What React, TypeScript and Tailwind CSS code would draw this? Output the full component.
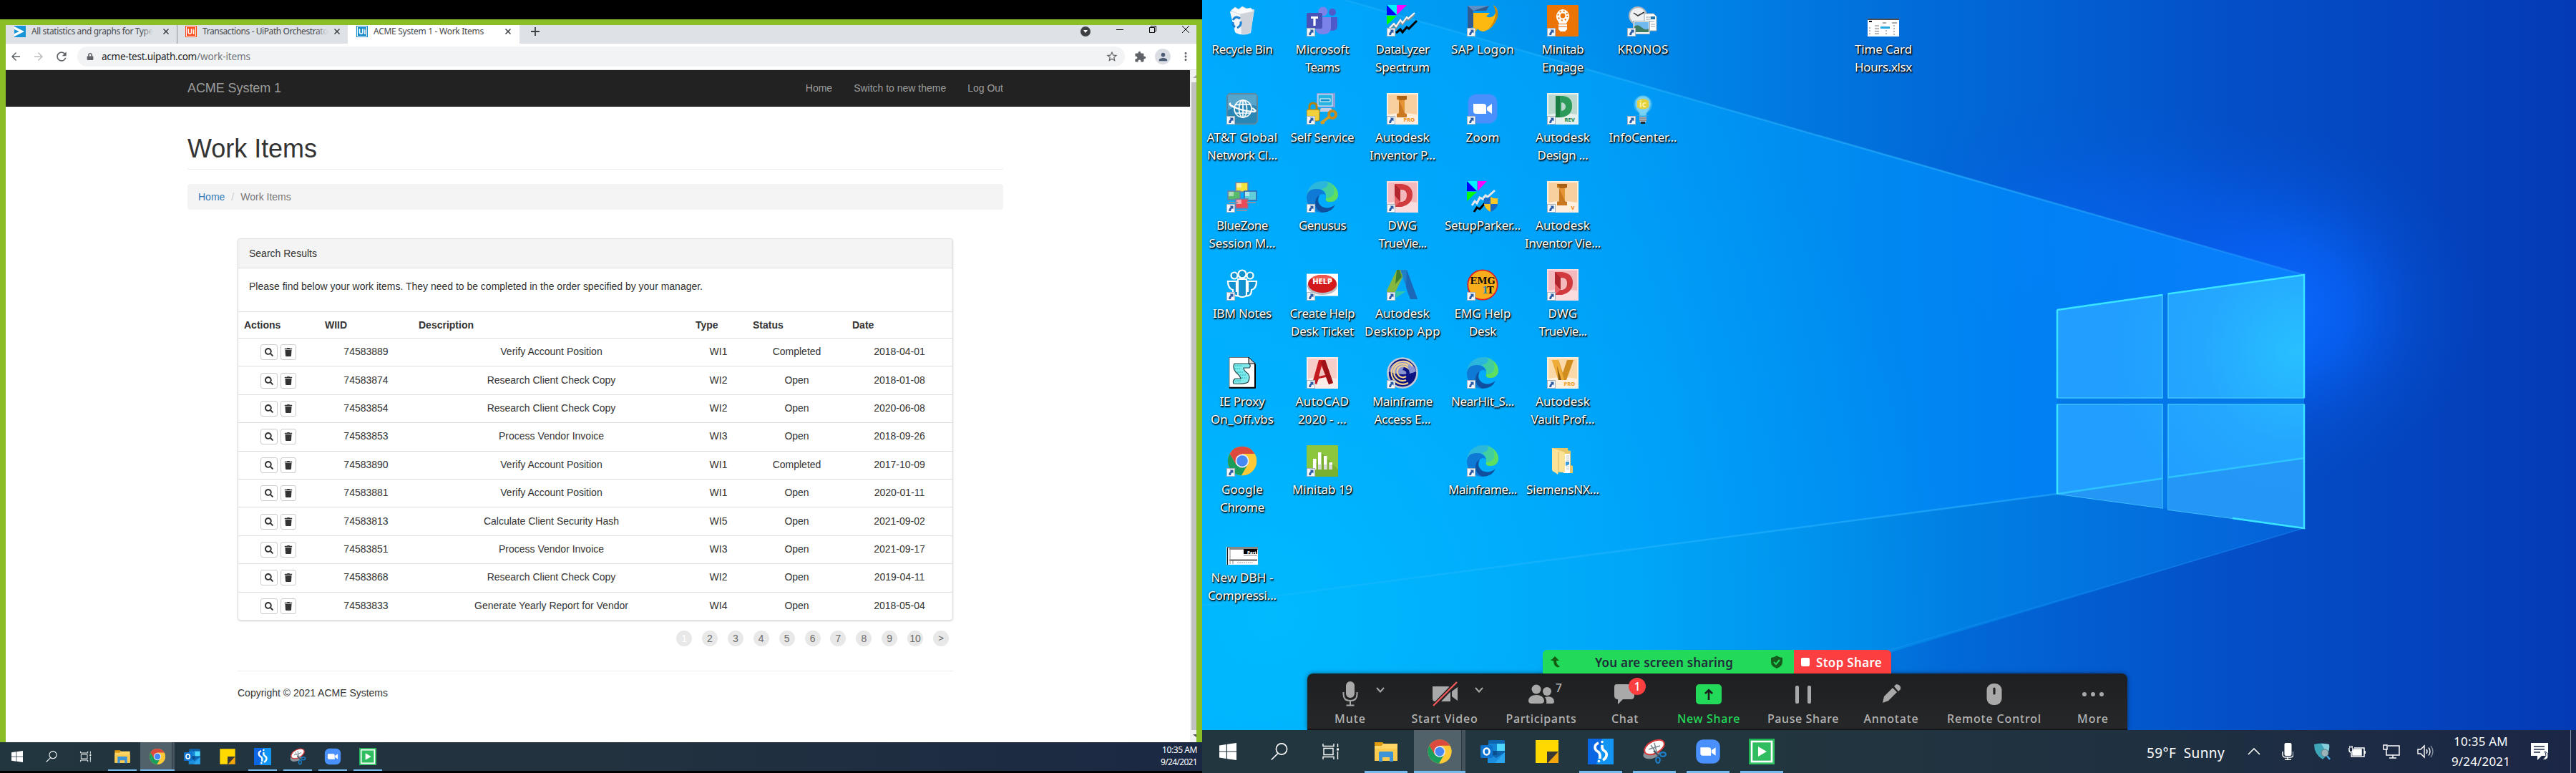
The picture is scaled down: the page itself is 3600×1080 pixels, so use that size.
import React, { useLayoutEffect, useRef, useState } from "react";
import { FaSearch, FaTrash, FaLock } from "react-icons/fa";
import { MdExtension, MdPerson, MdStarBorder, MdMoreVert, MdRefresh, MdArrowBack, MdArrowForward } from "react-icons/md";

/* Spreads a line of text over a known width by adjusting its tracking. */
function Fit({ w, children, className = "" }: { w: number; children: string; className?: string }) {
  const ref = useRef<HTMLSpanElement>(null);
  const [spacing, setSpacing] = useState(0);
  useLayoutEffect(() => {
    if (ref.current) {
      const natural = ref.current.getBoundingClientRect().width;
      setSpacing((w - natural) / children.length);
    }
  }, []);
  return (
    <span ref={ref} className={"inline-block whitespace-pre " + className} style={{ letterSpacing: spacing }}>
      {children}
    </span>
  );
}

/* ---------- icons shared by the task bars and the desktop ---------- */

const WindowsLogo = () => (
  <svg viewBox="0 0 24 24" className="h-full w-full" fill="#fff">
    <path d="M0 3.4 9.8 2v9.5H0zM11 1.8 24 0v11.5H11zM0 12.6h9.8V22L0 20.6zM11 12.6h13V24l-13-1.8z" />
  </svg>
);
const SearchGlyph = () => (
  <svg viewBox="0 0 24 24" className="h-full w-full" fill="none" stroke="#fff" strokeWidth="1.6">
    <circle cx="15" cy="8.5" r="7.6" />
    <path d="M10 14.5.8 23.5" />
  </svg>
);
const TaskView = () => (
  <svg viewBox="0 0 24 24" className="h-full w-full" fill="none" stroke="#fff" strokeWidth="1.4">
    <path d="M1 1v3.5h15V1M1 23v-3.5h15V23M2 7.5h13v9H2zM21.500 1v5M21.500 12v11" />
    <path d="M20 7.500h3v3h-3z" fill="#fff" stroke="none" />
  </svg>
);
const Explorer = () => (
  <svg viewBox="0 0 36 36" className="h-full w-full">
    <path d="M2 5h11l3 3h-3l-3 3H2z" fill="#e09a0b" />
    <path d="M2 10h9l3-3h20v24H2z" fill="#ffd566" />
    <path d="M2 14h32v17H2z" fill="#fbcb50" />
    <path d="M8 32V19.500q0-1.500 1.500-1.500h17q1.500 0 1.500 1.500V32h-5v-6H13v6z" fill="#3d93d8" />
  </svg>
);
const Chrome = () => (
  <svg viewBox="0 0 48 48" className="h-full w-full">
    <circle cx="24" cy="24" r="22" fill="#fdc936" />
    <path d="M24 13h19.100A22 22 0 0 0 4.900 13l9.600 16.500z" fill="#dc4a3d" />
    <path d="M4.950 13A22 22 0 0 0 23 46l9.500-16.500H14.500z" fill="#1a9e5b" />
    <path d="M24 14h19.600A22 22 0 0 1 23 46l10-17z" fill="#fdc936" />
    <circle cx="24" cy="24" r="10.400" fill="#e9f0fb" />
    <circle cx="24" cy="24" r="8.500" fill="#4688f4" />
  </svg>
);
const Outlook = () => (
  <svg viewBox="0 0 36 36" className="h-full w-full">
    <rect x="11" y="2" width="23" height="30" rx="1.500" fill="#0f64ad" />
    <path d="M11 7h12v10H11z" fill="#1583d6" />
    <path d="M23 7h11v10H23z" fill="#50d9ff" />
    <path d="M11 17h12v6H11z" fill="#0a4f91" />
    <path d="M10 20l12 7 12-8v15H10z" fill="#1c8ee0" />
    <path d="M34 19v15H20z" fill="#2aa5ee" />
    <rect x="0" y="9" width="17" height="18" rx="1.500" fill="#0c73cf" />
    <ellipse cx="8.500" cy="18" rx="4" ry="4.600" fill="none" stroke="#fff" strokeWidth="2.500" />
  </svg>
);
const Sticky = () => (
  <svg viewBox="0 0 36 36" className="h-full w-full">
    <path d="M2 2h32v16L18 34H2z" fill="#ffd900" />
    <path d="M18 34V18h16L20 34z" fill="#3a3835" />
    <path d="M34 18v16H19z" fill="#f2a60c" />
  </svg>
);
const SApp = () => (
  <svg viewBox="0 0 36 36" className="h-full w-full">
    <rect width="36" height="36" fill="#0b66e4" />
    <path d="M20 0h16v36H12z" fill="#1295f2" />
    <path d="M15 6q-5 2-5 6 0 4 4 6 3 2 3 6v4" fill="none" stroke="#fff" strokeWidth="3.600" />
    <path d="M20 9v3q0 3 3 5 4 2 3 7-1 4-5 6" fill="none" stroke="#fff" strokeWidth="3.600" />
    <circle cx="20" cy="4.500" r="1.800" fill="#fff" />
    <circle cx="15.500" cy="31.500" r="1.800" fill="#fff" />
  </svg>
);
const Snip = () => (
  <svg viewBox="0 0 36 36" className="h-full w-full">
    <ellipse cx="14" cy="21" rx="12" ry="7" fill="#8b9297" transform="rotate(-15 14 21)" />
    <ellipse cx="18" cy="12" rx="15" ry="8.500" fill="#fff" stroke="#d9383a" strokeWidth="2" transform="rotate(-28 18 12)" />
    <path d="m10 15 16-5M18 6l4 16M13 9l9 13" stroke="#7b8790" strokeWidth="1.500" fill="none" />
    <path d="m17 17 7 7" stroke="#3d4f5c" strokeWidth="2" />
    <ellipse cx="30" cy="22" rx="4" ry="2.800" fill="none" stroke="#1f7fc6" strokeWidth="2.200" />
    <ellipse cx="23" cy="30" rx="2.800" ry="4" fill="none" stroke="#1f7fc6" strokeWidth="2.200" />
  </svg>
);
const ZoomApp = () => (
  <svg viewBox="0 0 44 44" className="h-full w-full">
    <rect x="1.500" y="1.500" width="41" height="41" rx="12" fill="#4a90fc" />
    <path d="M9 15h14q4 0 4 4v10H13q-4 0-4-4z" fill="#fff" />
    <path d="m28 20 7-5v14l-7-5z" fill="#fff" />
  </svg>
);
const Camtasia = () => (
  <svg viewBox="0 0 36 36" className="h-full w-full">
    <rect width="36" height="36" fill="#1fb254" />
    <path d="M0 36 36 0v36z" fill="#35c566" />
    <rect x="4" y="4" width="28" height="28" fill="#2fbd5f" stroke="#fff" strokeWidth="2.600" />
    <path d="m13 11 12 7-12 7z" fill="#fff" />
  </svg>
);

/* ---------- desktop icons, drawn on a 44 × 44 canvas ---------- */

const S = ({ children }: { children: React.ReactNode }) => (
  <svg viewBox="0 0 44 44" className="h-11 w-11">
    {children}
  </svg>
);
const Recycle = () => (
  <S>
    <path d="M5 9 39 6l-5 33q-10 5-21 0z" fill="#e4e8ec" />
    <path d="m5 9 14 2 2 30q-5 0-9-3z" fill="#f4f6f8" />
    <path d="m39 7-20 4 2 30q7 0 12-2z" fill="#cdd3d9" />
    <path d="M6 8 12 3l5 3 5-4 6 3 6-1 4 5-19 4z" fill="#fafbfc" stroke="#c9ced3" strokeWidth=".7" />
    <path d="M9 21q4-7 10-2M20 23q1 6-5 9M9 24q0 5 3 7" fill="none" stroke="#1c7fd4" strokeWidth="3" />
  </S>
);
const Teams = () => (
  <S>
    <circle cx="36" cy="10" r="5" fill="#5059c9" />
    <path d="M31 17h12v12q0 7-7 7-5 0-7-3z" fill="#5059c9" />
    <circle cx="23" cy="9" r="6.500" fill="#7b83eb" />
    <path d="M12 17h22v14q0 10-11 10T12 31z" fill="#7b83eb" />
    <rect x="0" y="11" width="22" height="22" rx="2" fill="#4a52b8" />
    <path d="M6 16h10v3h-3.400v10H9.400V19H6z" fill="#fff" />
  </S>
);
const DataLyzer = () => (
  <S>
    <path d="M0 0h14v14z" fill="#00f3ff" />
    <path d="M0 0v14h14z" fill="#00f" />
    <path d="M14 0h14L14 14z" fill="#f0f" />
    <path d="M0 15h14L0 28z" fill="#0f0" />
    <path d="m4 33 6-6 3 4 6-9 3 4 6-8 2 2 8-7" fill="none" stroke="#8a8f94" strokeWidth="4" />
    <path d="m4 32 6-6 3 4 6-9 3 4 6-8 2 2 9-8" fill="none" stroke="#fff" strokeWidth="2" />
    <path d="m13 39 6-5 3 4 6-7 3 2 11-11" fill="none" stroke="#000" strokeWidth="3" />
  </S>
);
const SetupParker = () => (
  <S>
    <path d="M0 0h14v14z" fill="#00f3ff" />
    <path d="M0 0v14h14z" fill="#00f" />
    <path d="M15 0h13L15 14z" fill="#f0f" />
    <path d="M0 15h14L0 28z" fill="#0f0" />
    <path d="m7 34 4-6 3 3 4-8 4 2 4-5 3 2 10-9" fill="none" stroke="#e3e6e9" strokeWidth="3" />
    <path d="m10 43 4-6 4 2 7-8" fill="none" stroke="#000" strokeWidth="3" />
    <path d="M33 22q5 3 10 2v8q0 7-10 11-9-4-9-11v-8q5 0 9-2z" fill="#1769c5" />
    <path d="M33 22q5 3 10 2v8H33zM33 32v11q-8-4-9-11z" fill="#fbc626" />
  </S>
);
const Sap = () => (
  <S>
    <path d="M1 1h30l-4 7H9v22l-8 6z" fill="#2d5b92" />
    <path d="M1 1h30L9 8z" fill="#5c8fc4" />
    <path d="M9 11h23l-5 5q9 4 13-5 1-6-3-11 9 6 5 19-5 14-18 18-6 0-9-4l-6 9z" fill="#fdb90f" />
    <path d="M37 0q9 7 5 19-3 9-12 15 10-12 10-22 0-6-3-12z" fill="#c98708" />
  </S>
);
const Engage = () => (
  <S>
    <rect width="44" height="44" rx="1" fill="#ec7404" />
    <path d="M22 6a10 10 0 0 1 7 16l-2 4H17l-2-4a10 10 0 0 1 7-16zM16 27h12v3H16zM16 31h12v3l-3 3h-6l-3-3z" fill="#fff" />
    <circle cx="22" cy="15" r="3.400" fill="#ec7404" />
    <circle cx="22" cy="15" r="6.500" fill="none" stroke="#ec7404" strokeWidth="2" strokeDasharray="2 3.100" />
  </S>
);
const Kronos = () => (
  <S>
    <circle cx="15" cy="15" r="12" fill="#eef0f2" stroke="#b0b6bb" strokeWidth="2" />
    <path d="M9 11l6 4 9-5" stroke="#333" strokeWidth="1.500" fill="none" />
    <path d="M24 12h13l4 4v20H24z" fill="#fff" stroke="#9aa5ae" />
    <path d="M26 17h7M26 20h7M26 23h12M33 27h6M33 30h6" stroke="#90a0ae" />
    <path d="M33 16h6v4h-6z" fill="#1c73ad" />
    <rect x="8.500" y="22.500" width="23" height="18" fill="#fff" stroke="#9aa5ae" />
    <path d="M10 24h20v11H10z" fill="#6fb9ee" />
    <path d="M10 30q5-4 10 1t10 2v5H10z" fill="#3f7a63" />
  </S>
);
const Att = () => (
  <S>
    <rect x=".8" y=".8" width="42.400" height="42.400" rx="5" fill="#2a86b4" stroke="#6d8797" strokeWidth="1.600" />
    <path d="M2 4q0-2 2-2h36q2 0 2 2v14Q20 14 2 24z" fill="#55a5cc" />
    <g fill="none" stroke="#fff" strokeWidth="1.700">
      <circle cx="23" cy="22" r="12" />
      <ellipse cx="23" cy="22" rx="5.500" ry="12" />
      <path d="M23 10v24M13 16h20M12 28h22" />
      <path d="M6 14q-5 2 8 7t25 5q4-1-3-5" strokeWidth="2.400" />
    </g>
  </S>
);
const SelfService = () => (
  <S>
    <rect x="14" y="0" width="26" height="20" fill="#8ba0da" />
    <rect x="16" y="2" width="20" height="16" fill="#27b4e2" stroke="#dfe8f7" />
    <path d="M19 8h14v4H19z" fill="#1192cf" stroke="#fff" />
    <path d="M20 21h14l4 5H18z" fill="#c4cde4" />
    <path d="M4 24v-5q0-5 5-5t5 5v5" fill="none" stroke="#b1820d" strokeWidth="3" />
    <rect x="0" y="23" width="18" height="16" rx="2" fill="#f2cf3c" stroke="#a7780c" />
    <circle cx="36" cy="30" r="5" fill="none" stroke="#c98a1a" strokeWidth="4" />
    <path d="m32 33-12 9 3-1 2 1" stroke="#d69c26" strokeWidth="3.500" fill="none" />
  </S>
);
const Tile = ({ bg, low, children }: { bg: string; low: string; children: React.ReactNode }) => (
  <S>
    <rect width="44" height="44" fill={low} />
    <path d="M2 2h40v28Q20 26 2 30z" fill={bg} />
    {children}
  </S>
);
const InventorI = ({ tag, x }: { tag: string; x: number }) => (
  <Tile bg="#f8cf9f" low="#fdeede">
    <path d="M14 4h14v5l-3 1v18l3 1v5H14v-5l3-1V10l-3-1z" fill="#c9781f" />
    <path d="M14 4h14v5l-9 1z" fill="#a95f14" />
    <path d="m17 10 8 18V10z" fill="#e59536" />
    <text x={x} y="40" fontSize="7.500" fontWeight="800" fill="#f0922a" fontFamily="Noto Sans">{tag}</text>
  </Tile>
);
const DesignRev = () => (
  <Tile bg="#bcd9d0" low="#e6f1ed">
    <path d="M12 4h8q15 0 15 14T20 34h-8zm8 9v12q6-1 6-6t-6-6z" fill="#2c9a58" fillRule="evenodd" />
    <path d="M12 4h6v30h-6z" fill="#1b7c43" />
    <text x="24.500" y="40" fontSize="7.500" fontWeight="800" fill="#1c8a4c" fontFamily="Noto Sans">REV</text>
  </Tile>
);
const Dwg = () => (
  <Tile bg="#f4b9bd" low="#fbdcde">
    <path d="M11 4h10q15 2 15 15T21 36H11zm8 8v17q9 0 9-9t-9-8z" fill="#d13b3f" fillRule="evenodd" />
    <path d="m11 4 8 8v17l-8 7z" fill="#b0262c" />
    <path d="M11 20 19 29l-8 7z" fill="#e46467" />
  </Tile>
);
const BlueZone = () => (
  <S>
    <rect x="13" y="2" width="17" height="13" fill="#f3e33c" stroke="#6c7fae" strokeWidth="1.500" />
    <rect x="2" y="14" width="17" height="12" fill="#58bb69" stroke="#6c7fae" strokeWidth="1.500" />
    <rect x="25" y="14" width="17" height="13" fill="#62cfd8" stroke="#2f66b0" strokeWidth="1.500" />
    <rect x="13" y="25" width="17" height="13" fill="#ec4a56" stroke="#6c7fae" strokeWidth="1.500" />
    <path d="M3 15h7v6H3zM14 3h7v6h-7zM26 15h6v6h-6zM14 26h7v6h-7z" fill="#fff" opacity=".5" />
    <path d="M3 30h13M28 30h13M14 41h15" stroke="#8793a3" strokeWidth="2" />
  </S>
);
const Edge = () => (
  <S>
    <path d="M0 21C1 8 11 0 22 0c13 0 22 9 22 19 0 6-5 10-11 10-5 0-7-2-6-5 1-9-5-13-12-13Q4 12 0 21z" fill="#2bb6dc" />
    <path d="M22 0c13 0 22 9 22 19 0 6-5 10-11 10-5 0-7-2-6-5 1-8-2-11-7-13 8-1 12-6 8-11z" fill="#41cfa0" />
    <path d="M36 5q8 6 8 14c0 6-5 10-11 10-5 0-7-2-6-5 12 0 14-10 9-19z" fill="#5fdf5e" />
    <path d="M0 22Q1 11 14 11q10 0 13 9-5-4-9 0-6 5-4 12 3 8 9 12C8 44 0 34 0 22z" fill="#0f7ad6" />
    <path d="M18 20q-5 10 4 16 9 4 18-3-5 11-18 11Q12 40 12 30q1-8 6-10z" fill="#104f9e" />
  </S>
);
const IbmNotes = () => (
  <S>
    <g fill="#1191cd" stroke="#fff" strokeWidth="2.200">
      <path d="M2 17h12v14h4v6q-9 2-9-8-7-2-7-12zM42 17H30v14h-4v6q9 2 9-8 7-2 7-12z" />
      <path d="M16 14h12v22q-1 3-6 3t-6-3z" />
      <circle cx="11" cy="9" r="4.500" />
      <circle cx="33" cy="9" r="4.500" />
      <circle cx="22" cy="7" r="5.500" />
    </g>
  </S>
);
const Help = () => (
  <S>
    <rect y="6.500" width="44" height="31" fill="#fff" />
    <ellipse cx="22" cy="24" rx="21" ry="12" fill="#b9bfc4" />
    <ellipse cx="22" cy="20.500" rx="20" ry="12.500" fill="#d21a1d" />
    <ellipse cx="22" cy="13" rx="14" ry="5" fill="#ee5b52" />
    <text x="22" y="21" textAnchor="middle" fontSize="11" fontWeight="800" fill="#fff" fontFamily="Noto Sans">HELP</text>
  </S>
);
const DesktopApp = () => (
  <S>
    <path d="M14 1h7l3 6L12 32 1 33l-1-3z" fill="#86b840" />
    <path d="m14 1 4 0 3 10-9 10z" fill="#3c7c35" />
    <path d="M19 1h9l15 41H33z" fill="#1f7fc9" />
    <path d="m28 1 15 41H33l-6-16z" fill="#1a5db0" opacity=".7" />
    <path d="M11 31h16l-14 9z" fill="#31c3ac" />
  </S>
);
const Emg = () => (
  <S>
    <circle cx="22" cy="22" r="20.700" fill="#fbae1b" stroke="#d81f26" strokeWidth="1.800" />
    <text x="22" y="21" textAnchor="middle" fontSize="13" fontWeight="900" fill="#0c0c0c" fontFamily="DejaVu Serif">EMG</text>
    <text x="21" y="34" fontSize="13" fontWeight="900" fill="#1f86a8" fontFamily="DejaVu Serif">1</text>
    <text x="28" y="34" fontSize="13" fontWeight="900" fill="#0c0c0c" fontFamily="DejaVu Serif">T</text>
  </S>
);
const Proxy = () => (
  <S>
    <path d="M4 .5h27l9 8V43H4z" fill="#fff" stroke="#777" />
    <path d="M4 42.800h36V9" fill="none" stroke="#000" strokeWidth="2" />
    <path d="M31 0v9h9z" fill="#d0d0d0" stroke="#000" />
    <path d="M11 9h20q4 2 1 6h-8q0 4 6 8 4 5 0 12-4 3-20 2-2-4 2-7h8q-1-4-7-9-5-6-2-12z" fill="#7fe9ec" stroke="#26484c" strokeWidth="1.200" />
    <path d="M12 12h10M11 16h8M15 21h8M19 25h8M21 29h7M12 33h9" stroke="#18b6ba" strokeDasharray="2 1" />
  </S>
);
const AutoCad = () => (
  <Tile bg="#f7cfc8" low="#fcece8">
    <path d="M17 4h9l11 32-6 2-4-10-10 2-3 8-6-2z" fill="#c4191e" />
    <path d="m21 12 5 13-9 2z" fill="#f2c5bf" />
    <path d="m26 4 11 32-6 2L20 6z" fill="#9d1217" />
  </Tile>
);
const Mainframe = () => (
  <S>
    <circle cx="22" cy="22" r="20.500" fill="#0c1483" stroke="#c4c9d2" strokeWidth="2.600" />
    <path d="M3 20a19.500 19.500 0 0 1 38 0q-18 8-38 0z" fill="#8a94d2" />
    <g fill="none" stroke="#f6d28c" strokeWidth="2.200">
      <path d="M36 13A16 16 0 1 0 30 36M30 12A12 12 0 1 0 27 32M30 17a8 8 0 1 0-3 10" />
    </g>
    <path d="M22 18q7 1 5 7l5-2q0-8-8-9z" fill="#0c1483" />
  </S>
);
const Vault = () => (
  <Tile bg="#fbd9a9" low="#fef0dc">
    <path d="M7 4h9l6 18 6-18h9L27 32H16z" fill="#d08d1d" />
    <path d="m7 4 9 0 8 28h-8z" fill="#f0ac38" />
    <path d="m14 12 6 20h-4z" fill="#8d5b0d" />
    <text x="23.500" y="40" fontSize="7.500" fontWeight="800" fill="#f0a02a" fontFamily="Noto Sans">PRO</text>
  </Tile>
);
const Minitab = () => (
  <S>
    <rect width="44" height="44" rx="1.500" fill="#8cc63f" />
    <path d="m20 10 24 24v10H10V34z" fill="#79b02f" />
    <path d="M9 19h4.500v15H9zM16 10h4.500v24H16zM24 15h4.500v19H24zM31.500 24h4.500v10h-4.500z" fill="#fff" />
    <path d="M16 27h4.500v7H16zM24 27h4.500v7H24zM31.500 27h4.500v7h-4.500z" fill="#d5d9d5" />
  </S>
);
const Bulb = () => (
  <S>
    <circle cx="22" cy="16" r="13" fill="#66d8ff" opacity=".35" />
    <path d="M22 4a11 11 0 0 1 11 12q-1 7-6 12v4H17v-4q-5-5-6-12A11 11 0 0 1 22 4z" fill="#8fdcf5" opacity=".8" stroke="#5cb3df" strokeWidth=".8" />
    <path d="M14 11q8-6 16 0v9q-8 5-16 0z" fill="#e2cf3c" />
    <text x="22" y="20" textAnchor="middle" fontSize="12" fontWeight="700" fill="#fff3a0" fontFamily="Noto Sans">ic</text>
    <path d="M17 33h10v6l-3 3h-4l-3-3z" fill="#b8bfc5" />
    <path d="M17 35h10M17 38h10" stroke="#5f676e" />
    <path d="M19 40h6v3h-6z" fill="#23282c" />
  </S>
);
const Folder = () => (
  <S>
    <path d="M7 4h22v3l4 1v20l3 1v10h-4L8 37z" fill="#e9c766" />
    <path d="M23 12h9v27h-9z" fill="#fff" />
    <path d="M27 15h4M27 18h4M27 21h4M27 30h4M27 33h4" stroke="#b7bdc2" />
    <path d="M26 23h5v4l-5 2z" fill="#3d9ad8" />
    <path d="m7 4 18 6v28l-9-1-1 4-8-6z" fill="#fbe299" />
    <path d="M16 9v28" stroke="#edcb78" strokeWidth="2" />
  </S>
);
const Dbh = () => (
  <S>
    <rect y="19" width="44" height="25" fill="#fff" />
    <path d="M1 20h43M1.500 20v24M4 22h40" stroke="#111" strokeWidth="1.200" />
    <path d="M24 22h19v7H24z" fill="#000" />
    <path d="M4 37.500h39" stroke="#222" strokeWidth="1.400" />
    <path d="M5 22v21M9 38v5M24 31h19" stroke="#888" />
    <text x="29" y="28.500" fontSize="6" fontWeight="800" fill="#fff" fontFamily="Noto Sans">Part</text>
    <path d="M15 41h22" stroke="#999" strokeDasharray="2 1" />
  </S>
);
const TimeCard = () => (
  <S>
    <rect y="19" width="44" height="25" fill="#fff" />
    <path d="M0 20h44" stroke="#111" strokeWidth="1.500" />
    <path d="M2 23h4" stroke="#111" strokeWidth="2" />
    <path d="M21 25h5M34 25h7" stroke="#555" />
    <path d="M18 30h13v3H18z" fill="#27a9e3" />
    <path d="M10 29h6M10 33h6M10 36.500h6M10 40h6M2 32h2M2 36h2M2 40h2M25 36h2M25 40h2M36 29h2M36 33h2M36 37h2M36 41h2" stroke="#777" />
  </S>
);

type Line = [string, number];
type Item = { c: number; r: number; icon: React.ReactNode; link?: boolean; lines: Line[] };

const items: Item[] = [
  { c: 1, r: 1, icon: <Recycle />, link: false, lines: [["Recycle Bin", 85]] },
  { c: 2, r: 1, icon: <Teams />, lines: [["Microsoft", 75], ["Teams", 48]] },
  { c: 3, r: 1, icon: <DataLyzer />, lines: [["DataLyzer", 75], ["Spectrum", 76]] },
  { c: 4, r: 1, icon: <Sap />, lines: [["SAP Logon", 88]] },
  { c: 5, r: 1, icon: <Engage />, lines: [["Minitab", 59], ["Engage", 58]] },
  { c: 6, r: 1, icon: <Kronos />, lines: [["KRONOS", 71]] },
  { c: 9, r: 1, icon: <TimeCard />, link: false, lines: [["Time Card", 80], ["Hours.xlsx", 80]] },
  { c: 1, r: 2, icon: <Att />, lines: [["AT&T Global", 99], ["Network Cl...", 98]] },
  { c: 2, r: 2, icon: <SelfService />, lines: [["Self Service", 89]] },
  { c: 3, r: 2, icon: <InventorI tag="PRO" x={23.5} />, lines: [["Autodesk", 76], ["Inventor P...", 92]] },
  { c: 4, r: 2, icon: <div className="h-11 w-11"><ZoomApp /></div>, lines: [["Zoom", 47]] },
  { c: 5, r: 2, icon: <DesignRev />, lines: [["Autodesk", 76], ["Design ...", 71]] },
  { c: 6, r: 2, icon: <Bulb />, lines: [["InfoCenter...", 95]] },
  { c: 1, r: 3, icon: <BlueZone />, lines: [["BlueZone", 72], ["Session M...", 93]] },
  { c: 2, r: 3, icon: <Edge />, lines: [["Genusus", 66]] },
  { c: 3, r: 3, icon: <Dwg />, lines: [["DWG", 41], ["TrueVie...", 67]] },
  { c: 4, r: 3, icon: <SetupParker />, link: false, lines: [["SetupParker...", 106]] },
  { c: 5, r: 3, icon: <InventorI tag="V" x={33.5} />, lines: [["Autodesk", 76], ["Inventor Vie...", 106]] },
  { c: 1, r: 4, icon: <IbmNotes />, lines: [["IBM Notes", 82]] },
  { c: 2, r: 4, icon: <Help />, lines: [["Create Help", 91], ["Desk Ticket", 88]] },
  { c: 3, r: 4, icon: <DesktopApp />, lines: [["Autodesk", 76], ["Desktop App", 106]] },
  { c: 4, r: 4, icon: <Emg />, lines: [["EMG Help", 79], ["Desk", 38]] },
  { c: 5, r: 4, icon: <Dwg />, lines: [["DWG", 41], ["TrueVie...", 67]] },
  { c: 1, r: 5, icon: <Proxy />, link: false, lines: [["IE Proxy", 63], ["On_Off.vbs", 88]] },
  { c: 2, r: 5, icon: <AutoCad />, lines: [["AutoCAD", 75], ["2020 - ...", 68]] },
  { c: 3, r: 5, icon: <Mainframe />, lines: [["Mainframe", 84], ["Access E...", 79]] },
  { c: 4, r: 5, icon: <Edge />, lines: [["NearHit_S...", 88]] },
  { c: 5, r: 5, icon: <Vault />, lines: [["Autodesk", 76], ["Vault Prof...", 89]] },
  { c: 1, r: 6, icon: <div className="h-11 w-11"><Chrome /></div>, lines: [["Google", 58], ["Chrome", 62]] },
  { c: 2, r: 6, icon: <Minitab />, lines: [["Minitab 19", 84]] },
  { c: 4, r: 6, icon: <Edge />, lines: [["Mainframe...", 96]] },
  { c: 5, r: 6, icon: <Folder />, link: false, lines: [["SiemensNX...", 102]] },
  { c: 1, r: 7, icon: <Dbh />, link: false, lines: [["New DBH -", 87], ["Compressi...", 96]] },
];

function DesktopIcon({ item }: { item: Item }) {
  return (
    <div className="flex flex-col items-center" style={{ gridColumn: item.c, gridRow: item.r }}>
      <div className="relative h-11 w-11">
        {item.icon}
        {item.link !== false && (
          <svg viewBox="0 0 12 12" className="absolute bottom-0 left-0 h-3 w-3">
            <rect x=".5" y=".5" width="11" height="11" fill="#f6f8fa" stroke="#a5b3c0" />
            <path d="M4.500 2.500H9.500V7.500L8 6Q6 7.500 6 10H3.200Q3 6.500 6 4z" fill="#2a5ba4" />
          </svg>
        )}
      </div>
      <div className="mt-[5px] flex flex-col items-center text-[17px] leading-[25px] text-white [text-shadow:1px_1px_1px_#000,1px_2px_2px_rgba(0,0,0,0.85),0_0_3px_rgba(0,0,0,0.5)]">
        {item.lines.map(([t, w]) => (
          <Fit key={t} w={w}>{t}</Fit>
        ))}
      </div>
    </div>
  );
}

function Wallpaper() {
  return (
    <svg className="absolute inset-0 h-[1080px] w-[1920px]" viewBox="1680 0 1920 1080" preserveAspectRatio="none">
      <defs>
        <linearGradient id="base" x1="1680" x2="3600" y1="0" y2="0" gradientUnits="userSpaceOnUse">
          <stop offset="0" stopColor="#00a2f8" />
          <stop offset=".2" stopColor="#0098f1" />
          <stop offset=".32" stopColor="#008aea" />
          <stop offset=".45" stopColor="#0175de" />
          <stop offset=".6" stopColor="#0262d4" />
          <stop offset=".75" stopColor="#044fc8" />
          <stop offset="1" stopColor="#043ab5" />
        </linearGradient>
        <linearGradient id="beam" x1="1680" x2="3220" y1="0" y2="0" gradientUnits="userSpaceOnUse">
          <stop offset="0" stopColor="#00abfe" />
          <stop offset=".35" stopColor="#009ff7" />
          <stop offset=".55" stopColor="#0091f4" />
          <stop offset=".75" stopColor="#0086f8" />
          <stop offset="1" stopColor="#0a84ff" />
        </linearGradient>
        <linearGradient id="under" x1="1680" x2="3220" y1="0" y2="0" gradientUnits="userSpaceOnUse">
          <stop offset="0" stopColor="#00b2fc" />
          <stop offset=".4" stopColor="#00a2f2" />
          <stop offset=".7" stopColor="#0086e6" />
          <stop offset="1" stopColor="#0569e0" />
        </linearGradient>
        <radialGradient id="low" cx="1780" cy="860" r="950" gradientUnits="userSpaceOnUse">
          <stop offset="0" stopColor="#00bcff" stopOpacity=".85" />
          <stop offset=".5" stopColor="#00b2ff" stopOpacity=".5" />
          <stop offset="1" stopColor="#00a8ff" stopOpacity="0" />
        </radialGradient>
        <radialGradient id="glow">
          <stop offset="0" stopColor="#0a6cff" />
          <stop offset=".35" stopColor="#0864fa" stopOpacity=".75" />
          <stop offset=".7" stopColor="#065ae6" stopOpacity=".25" />
          <stop offset="1" stopColor="#0550d8" stopOpacity="0" />
        </radialGradient>
        <linearGradient id="ray" x1="1680" x2="3220" y1="0" y2="0" gradientUnits="userSpaceOnUse">
          <stop offset="0" stopColor="#3ac2ff" stopOpacity=".15" />
          <stop offset=".7" stopColor="#2ab4ff" stopOpacity=".6" />
          <stop offset="1" stopColor="#2a9cff" stopOpacity=".4" />
        </linearGradient>
        <radialGradient id="pane" cx="3210" cy="490" r="260" gradientUnits="userSpaceOnUse">
          <stop offset="0" stopColor="#28bfff" />
          <stop offset=".5" stopColor="#24a8ff" />
          <stop offset="1" stopColor="#219eff" />
        </radialGradient>
      </defs>
      <rect x="1680" width="1920" height="1080" fill="url(#base)" />
      <ellipse cx="3190" cy="430" rx="270" ry="250" fill="url(#glow)" />
      <ellipse cx="2960" cy="330" rx="420" ry="200" fill="url(#glow)" opacity=".45" />
      <path d="M1680 846 2875 690 3220 738 2080 1080H1680z" fill="url(#under)" opacity=".75" />
      <path d="M1680 0H1880L3220 384V690H2875L1680 846z" fill="url(#beam)" opacity=".85" />
      <rect x="1680" width="1300" height="1080" fill="url(#low)" />
      <path d="M1880 0 3220 384M1680 846 2875 690" stroke="url(#ray)" strokeWidth="2.500" fill="none" />
      <path d="M3220 738 2560 932" stroke="#2a9cff" strokeOpacity=".3" strokeWidth="1.500" />
      <path d="M2875 433 3220 384V738L2875 690z" fill="#0478e8" />
      <g fill="url(#pane)" stroke="#3ec4ff" strokeWidth="1.500">
        <path d="M2875 433 3022 412V556H2875z" />
        <path d="M3030 410.500 3220 384V556H3030z" />
        <path d="M2875 565H3022V710L2875 690z" />
        <path d="M3030 565H3220V738L3030 712z" />
      </g>
      <path d="M2875 690 3022 668.500V710zM3030 667 3220 640V738L3030 712z" fill="#2693f4" opacity=".8" />
      <path d="M2875 690 3022 668.500M3030 667 3220 640" stroke="#2dc4ff" strokeWidth="2.500" />
      <path d="M3030 410.500 3220 384V556M3220 565V738L3120 724M2875 433V556M2875 565V690M2875 433 3022 412" fill="none" stroke="#38e4ff" strokeWidth="2.500" />
    </svg>
  );
}

/* ---------- task bar buttons: geometry at 100 % and at 150 % ---------- */

const apps = [
  { k: "explorer", icon: <Explorer />, open: true },
  { k: "chrome", icon: <Chrome />, open: true, active: true },
  { k: "outlook", icon: <Outlook />, open: false },
  { k: "sticky", icon: <Sticky />, open: false },
  { k: "s", icon: <SApp />, open: true },
  { k: "snip", icon: <Snip />, open: true },
  { k: "zoom", icon: <ZoomApp />, open: true },
  { k: "cam", icon: <Camtasia />, open: true },
];

function TaskButtons({ big }: { big: boolean }) {
  const slot = big ? "w-[72px]" : "w-12";
  const glyph = big ? "h-6 w-6" : "h-4 w-4";
  return (
    <div className="flex h-full">
      {[<WindowsLogo key="w" />, <SearchGlyph key="s" />, <TaskView key="t" />].map((g, i) => (
        <div key={i} className={"flex items-center justify-center " + slot}>
          <div className={glyph}>{g}</div>
        </div>
      ))}
      <div className={big ? "ml-[5px] flex" : "ml-[3px] flex"}>
        {apps.map((a) => (
          <div
            key={a.k}
            className={
              "relative flex items-center justify-center " +
              (big ? "mr-[3px] w-[72px] " : "mr-px w-12 ") +
              (a.active ? "bg-[#51626b]" : "")
            }
          >
            <div className={big ? "h-9 w-9" : "h-6 w-6"}>{a.icon}</div>
            {a.active && <div className={"absolute inset-y-0 right-0 border-l border-[#2b3b44] bg-[#44535c] " + (big ? "w-1.5" : "w-1")} />}
            {a.open && (
              <div
                className={
                  "absolute bottom-0 bg-[#76b9ed] " +
                  (big ? "h-[3px] " : "h-0.5 ") +
                  (a.active ? "inset-x-0" : big ? "inset-x-1.5" : "inset-x-1")
                }
              />
            )}
          </div>
        ))}
      </div>
    </div>
  );
}

/* ---------- browser ---------- */

const rows = [
  ["74583889", "Verify Account Position", "WI1", "Completed", "2018-04-01"],
  ["74583874", "Research Client Check Copy", "WI2", "Open", "2018-01-08"],
  ["74583854", "Research Client Check Copy", "WI2", "Open", "2020-06-08"],
  ["74583853", "Process Vendor Invoice", "WI3", "Open", "2018-09-26"],
  ["74583890", "Verify Account Position", "WI1", "Completed", "2017-10-09"],
  ["74583881", "Verify Account Position", "WI1", "Open", "2020-01-11"],
  ["74583813", "Calculate Client Security Hash", "WI5", "Open", "2021-09-02"],
  ["74583851", "Process Vendor Invoice", "WI3", "Open", "2021-09-17"],
  ["74583868", "Research Client Check Copy", "WI2", "Open", "2019-04-11"],
  ["74583833", "Generate Yearly Report for Vendor", "WI4", "Open", "2018-05-04"],
];
const cols = "grid grid-cols-[113px_131px_387px_80px_139px_148px]";

const Cross = () => (
  <svg viewBox="0 0 8 8" className="h-2 w-2" stroke="#3c4043" strokeWidth="1.500">
    <path d="m.5.5 7 7m0-7-7 7" />
  </svg>
);
const UiIcon = ({ className }: { className: string }) => (
  <span className={"flex h-4 w-4 items-center justify-center p-px " + className}>
    <span className="flex size-full items-center justify-center border border-white text-[10px] leading-none font-bold text-white">Ui</span>
  </span>
);

function TabStrip() {
  return (
    <div className="flex h-[26px] items-stretch bg-[#dee1e6] text-[12px] text-[#45494d]">
      <div className="flex w-[239px] items-center pb-2 pl-[12px]">
        <svg viewBox="0 0 16 16" className="h-4 w-4">
          <rect width="16" height="16" fill="#1595d8" />
          <path d="m0 1 14 7-14 7v-4l7-3-7-3z" fill="#fff" />
        </svg>
        <div className="relative ml-2 flex">
          <Fit w={170}>All statistics and graphs for Type</Fit>
          <span className="absolute inset-y-0 right-0 w-4 bg-linear-to-r from-transparent to-[#dee1e6]" />
        </div>
        <span className="ml-[14px] flex"><Cross /></span>
      </div>
      <div className="flex w-[239px] items-center border-l border-[#8d9196] pb-2 pl-[11px]">
        <UiIcon className="bg-[#fa4616]" />
        <div className="relative ml-2 flex">
          <Fit w={175}>Transactions - UiPath Orchestrato</Fit>
          <span className="absolute inset-y-0 right-0 w-4 bg-linear-to-r from-transparent to-[#dee1e6]" />
        </div>
        <span className="ml-[9px] flex"><Cross /></span>
      </div>
      <div className="flex w-[240px] items-center bg-white pb-2 pl-3">
        <UiIcon className="bg-[#0f85c9]" />
        <Fit w={154} className="ml-2">ACME System 1 - Work Items</Fit>
        <span className="ml-[30px] flex"><Cross /></span>
      </div>
      <div className="flex items-center pb-2 pl-[16px]">
        <svg viewBox="0 0 12 12" className="h-3 w-3" stroke="#3c4043" strokeWidth="1.800"><path d="M6 0v12M0 6h12" /></svg>
      </div>
      <div className="ml-auto flex items-start gap-[36px] pt-px pr-[10px]">
        <span className="mt-px flex h-3.5 w-3.5 items-center justify-center rounded-full bg-[#3c4043]">
          <svg viewBox="0 0 6 4" className="h-1 w-1.5" fill="#fff"><path d="M0 0h6L3 4z" /></svg>
        </span>
        <svg viewBox="0 0 10 10" className="h-[10px] w-[10px]" stroke="#000"><path d="M0 5.500h10" /></svg>
        <svg viewBox="0 0 10 10" className="h-[10px] w-[10px]" stroke="#000" fill="none"><path d="M.5 2.500h7v7h-7zM2.500 2.500v-2h7v7h-2" /></svg>
        <svg viewBox="0 0 10 10" className="h-[10px] w-[10px]" stroke="#000"><path d="m0 0 10 10M10 0 0 10" /></svg>
      </div>
    </div>
  );
}

function AddressBar() {
  return (
    <div className="flex h-[37px] items-center border-b border-[#dcdddf] bg-white text-[#5f6368]">
      <MdArrowBack className="ml-[5px] size-[18px]" />
      <MdArrowForward className="ml-[14px] size-[18px] text-[#bcbec1]" />
      <MdRefresh className="ml-[13px] size-[20px]" />
      <div className="ml-[12px] flex h-7 w-[1464px] items-center rounded-full bg-[#f1f3f4] pl-[13px] text-[13.5px]">
        <FaLock className="size-[10px]" />
        <Fit w={133} className="ml-[11px] text-[#202124]">acme-test.uipath.com</Fit>
        <Fit w={75} className="text-[#70757a]">/work-items</Fit>
        <MdStarBorder className="mr-[9px] ml-auto size-[18px]" />
      </div>
      <MdExtension className="ml-[13px] size-[17px]" />
      <span className="ml-[12px] flex size-[22px] items-center justify-center rounded-full bg-[#dadde3]">
        <MdPerson className="size-[17px] text-[#4b5b73]" />
      </span>
      <MdMoreVert className="ml-3 size-[18px]" />
    </div>
  );
}

function WorkItems() {
  return (
    <div className="flex h-[939px] font-['Liberation_Sans',Arial,sans-serif] text-[14px] leading-5 text-[#333]">
      <div className="w-[1655px] bg-white">
        <nav className="flex h-[51px] items-center border-b border-[#080808] bg-[#222] pr-[261px] pl-[254px] text-[#9d9d9d]">
          <Fit w={131} className="text-[18px]">ACME System 1</Fit>
          <div className="ml-auto flex gap-[30px]">
            <span>Home</span>
            <Fit w={129}>Switch to new theme</Fit>
            <span>Log Out</span>
          </div>
        </nav>
        <div className="ml-[254px] w-[1140px]">
          <h1 className="mt-[38px] h-[50px] border-b border-[#eee] text-[36px] leading-[42px]">
            <Fit w={181}>Work Items</Fit>
          </h1>
          <div className="mt-5 flex h-9 items-center gap-[9px] rounded bg-[#f4f4f4] px-[15px]">
            <a className="text-[#337ab7]">Home</a>
            <span className="text-[#ccc]">/</span>
            <span className="text-[#777]">Work Items</span>
          </div>
          <div className="mx-[70px] mt-10">
            <div className="rounded border border-[#ddd] shadow-sm">
              <div className="flex h-[41px] items-center rounded-t border-b border-[#ddd] bg-[#f4f4f4] px-[15px]">Search Results</div>
              <p className="h-[60px] px-[15px] pt-[15px]">
                <Fit w={634}>Please find below your work items. They need to be completed in the order specified by your manager.</Fit>
              </p>
              <div className={cols + " h-[37px] items-center border-t border-[#ddd] font-bold"}>
                {["Actions", "WIID", "Description", "Type", "Status", "Date"].map((h) => (
                  <span key={h} className="pl-2">{h}</span>
                ))}
              </div>
              <div className="grid h-[394px] grid-rows-10">
                {rows.map((r) => (
                  <div key={r[0]} className={cols + " items-center border-t border-[#ddd] text-center"}>
                    <div className="flex items-center pl-[31px]">
                      <span className="flex h-[22px] w-6 items-center justify-center rounded-[3px] border border-[#ccc]"><FaSearch className="size-3" /></span>
                      <span className="ml-1 flex h-[22px] w-[22px] items-center justify-center rounded-[3px] border border-[#ccc]"><FaTrash className="size-3" /></span>
                    </div>
                    {r.map((c) => (
                      <span key={c} className="pb-0.5">{c}</span>
                    ))}
                  </div>
                ))}
              </div>
            </div>
            <div className="mt-[14px] mr-[6px] flex justify-end gap-[13.9px]">
              {["1", "2", "3", "4", "5", "6", "7", "8", "9", "10", ">"].map((p, i) => (
                <span
                  key={p}
                  className={
                    "flex size-[22px] items-center justify-center rounded-full bg-[#e8e8e8] " +
                    (i === 0 ? "text-white" : i === 10 ? "text-[13px] text-[#666]" : "text-[#6b6b6b]")
                  }
                >
                  {p}
                </span>
              ))}
            </div>
            <div className="mt-[34px] border-t border-[#eee] pt-5">
              <Fit w={210}>Copyright © 2021 ACME Systems</Fit>
            </div>
          </div>
        </div>
      </div>
      <div className="flex w-[9px] flex-col items-end bg-[#f1f1f1]">
        <svg viewBox="0 0 5 4" className="mt-[7px] h-1 w-[5px]" fill="#a3a3a3"><path d="M5 0v4H0z" /></svg>
        <div className="mt-[6px] h-[905px] w-[7px] bg-[#c1c1c1]" />
        <svg viewBox="0 0 5 4" className="mt-[6px] h-1 w-[5px]" fill="#505050"><path d="M0 0h5v4z" /></svg>
      </div>
    </div>
  );
}

function LeftScreen() {
  return (
    <section className="flex h-[1080px] w-[1680px] flex-col bg-black">
      <div className="mt-[27px] h-[1010px] border-x-8 border-t-8 border-[#8abe27] bg-white">
        <TabStrip />
        <AddressBar />
        <WorkItems />
      </div>
      <div className="flex h-10 justify-between bg-linear-to-r from-[#22363f] via-[#22323f] to-[#1b2843] text-white">
        <TaskButtons big={false} />
        <div className="flex flex-col items-end pt-[2px] pr-[7px] text-[12px] leading-[17px]">
          <Fit w={49}>10:35 AM</Fit>
          <Fit w={51}>9/24/2021</Fit>
        </div>
      </div>
    </section>
  );
}

/* ---------- meeting controls ---------- */

const G = ({ children }: { children: React.ReactNode }) => (
  <svg viewBox="0 0 40 36" className="h-9 w-10" fill="#a9a9a9">
    {children}
  </svg>
);

const controls: { label: string; lw: number; box: string; icon: React.ReactNode }[] = [
  {
    label: "Mute", lw: 44, box: "w-[120px]",
    icon: (
      <G>
        <rect x="14" y="0" width="12" height="23" rx="6" />
        <path d="M10.500 15v3q0 9 9.500 9t9.500-9v-3M20 27v6M14.500 33.500h11" fill="none" stroke="#a9a9a9" strokeWidth="2" />
      </G>
    ),
  },
  {
    label: "Start Video", lw: 93, box: "w-[144px]",
    icon: (
      <G>
        <path d="M3 7h21q4 0 4 4v17H7q-4 0-4-4zM30 14l8-6v19l-8-6z" />
        <path d="M4 35 37 1" stroke="#222324" strokeWidth="6" />
        <path d="M4 34 37 1" stroke="#ff5a5a" strokeWidth="2.200" />
      </G>
    ),
  },
  {
    label: "Participants", lw: 99, box: "w-[126px]",
    icon: (
      <G>
        <circle cx="13" cy="11" r="6.500" />
        <circle cx="28" cy="14" r="6" />
        <path d="M2 27q1-8 11-8t11 8q0 4-5 4H7q-5 0-5-4zM27 31q1-5-2-9 12-3 13 6 0 3-3 3z" />
      </G>
    ),
  },
  {
    label: "Chat", lw: 38, box: "w-[108px]",
    icon: (
      <G>
        <path d="M8 4h21q4 0 4 4v12q0 5-5 5H17l-7 7v-7q-5 0-5-5V8q0-4 3-4z" />
      </G>
    ),
  },
  {
    label: "New Share", lw: 88, box: "w-[126px]",
    icon: (
      <G>
        <rect x="2" y="4" width="36" height="28" rx="5" fill="#23d959" />
        <path d="M20 26V12M15 17l5-5 5 5" fill="none" stroke="#1c1f20" strokeWidth="2.600" />
      </G>
    ),
  },
  {
    label: "Pause Share", lw: 100, box: "w-[138px]",
    icon: (
      <G>
        <rect x="9" y="6" width="5" height="25" rx="2" />
        <rect x="26" y="6" width="5" height="25" rx="2" />
      </G>
    ),
  },
  {
    label: "Annotate", lw: 77, box: "w-[108px]",
    icon: (
      <G>
        <path d="m8 30 2-9L22 9l6 6-12 12zM24 7l3-3q3 0 5 2t1 5l-3 3z" />
      </G>
    ),
  },
  {
    label: "Remote Control", lw: 132, box: "w-[180px]",
    icon: (
      <G>
        <rect x="9.500" y="3" width="21" height="30" rx="9" />
        <path d="M20 10v7" stroke="#222324" strokeWidth="3.200" strokeLinecap="round" />
      </G>
    ),
  },
  {
    label: "More", lw: 44, box: "w-[96px]",
    icon: (
      <G>
        <circle cx="8" cy="18" r="3" />
        <circle cx="20" cy="18" r="3" />
        <circle cx="32" cy="18" r="3" />
      </G>
    ),
  },
];

const Caret = () => (
  <svg viewBox="0 0 12 8" className="h-2 w-3" fill="none" stroke="#a9a9a9" strokeWidth="2">
    <path d="m1 1 5 5.500L11 1" />
  </svg>
);

function MeetingBar() {
  return (
    <div className="absolute top-[908px] left-[147px] w-[1146px]">
      <div className="ml-[329px] flex h-[33px] w-[487px] overflow-hidden rounded-t-[6px] text-[17px] font-semibold shadow-lg">
        <div className="flex w-[351px] items-center bg-[#23d959] pr-[16px] pl-[11px] text-[#1f2b3a]">
          <svg viewBox="0 0 14 16" className="h-4 w-[14px]" fill="#125c12"><path d="M6 0l6 6H8q0 6 5 8-2 2-4 1-5-2-5-9H0z" /></svg>
          <Fit w={193} className="mt-0.5 ml-[48px]">You are screen sharing</Fit>
          <svg viewBox="0 0 16 18" className="ml-auto h-[18px] w-4">
            <path d="M8 0q4 3 8 3v6q0 6-8 9-8-3-8-9V3q4 0 8-3z" fill="#155c1c" />
            <path d="m4 9 3 3 5-6" fill="none" stroke="#23d959" strokeWidth="2" />
          </svg>
        </div>
        <div className="flex w-[136px] items-center bg-[#fb3e40] pl-[10px] text-white">
          <span className="size-3 rounded-[2px] bg-white" />
          <Fit w={92} className="mt-0.5 ml-[9px]">Stop Share</Fit>
        </div>
      </div>
      <div className="flex h-[79px] rounded-t-lg border-b-2 border-[#141516] bg-linear-to-b from-[#1e1f20] to-[#262728] text-[16px] font-medium text-[#b4b4b4] shadow-[0_0_6px_rgba(0,0,0,0.5)]">
        {controls.map((c) => (
          <div key={c.label} className={"relative flex shrink-0 flex-col items-center pt-[11px] " + c.box}>
            {c.icon}
            <Fit w={c.lw} className={"mt-1 leading-6 " + (c.label === "New Share" ? "text-[#23d959]" : "")}>{c.label}</Fit>
            {c.label === "Mute" && <span className="absolute top-[19px] right-[12px]"><Caret /></span>}
            {c.label === "Start Video" && <span className="absolute top-[19px] right-[18px]"><Caret /></span>}
            {c.label === "Participants" && <span className="absolute top-[8px] right-[34px] leading-6">7</span>}
            {c.label === "Chat" && (
              <span className="absolute top-[6px] right-[25px] flex size-6 items-center justify-center rounded-full bg-[#fb3e40] text-white">1</span>
            )}
          </div>
        ))}
      </div>
    </div>
  );
}

function Tray() {
  return (
    <div className="relative flex h-full items-center pr-[7px] text-white">
      <Fit w={109} className="mt-1 text-[19px]">59°F  Sunny</Fit>
      <svg viewBox="0 0 18 10" className="ml-[32px] h-[10px] w-[18px]" fill="none" stroke="#fff" strokeWidth="1.600"><path d="m1 9 8-8 8 8" /></svg>
      <svg viewBox="0 0 16 24" className="ml-[30px] h-6 w-4" fill="#fff">
        <rect x="3.500" width="10" height="18" rx="2" />
        <path d="M1 12v4q0 4 4 4h7q4 0 4-4v-4M8 20v3M4 23.300h9" stroke="#fff" strokeWidth="1.500" fill="none" />
      </svg>
      <svg viewBox="0 0 24 24" className="ml-[28px] h-6 w-6">
        <path d="M1 2Q11-1 22 2q2 12-9 21Q1 16 1 2z" fill="#3fa6ba" />
        <path d="M11 1q6 0 11 1 1 8-3 13z" fill="#86cfdb" />
        <circle cx="16" cy="14" r="5" fill="#9db4bb" stroke="#5d7c86" />
        <path d="m19 18 4 5" stroke="#4aa6e3" strokeWidth="2.500" />
      </svg>
      <svg viewBox="0 0 24 18" className="ml-[25px] h-[18px] w-6" fill="none" stroke="#fff" strokeWidth="1.500">
        <path d="M8 4h14v12H4v-5M23.300 8v4M1 4v3q0 3 2.500 3T6 7V4M2 1v3M5 1v3" />
        <path d="M8 6h10v8H6v-4z" fill="#fff" />
      </svg>
      <svg viewBox="0 0 24 20" className="ml-[24px] h-5 w-6" fill="none" stroke="#fff" strokeWidth="1.500">
        <path d="M7 2h16v13H5V7M1 1h5v6H1zM14 15v4M9 19h10" />
      </svg>
      <svg viewBox="0 0 24 20" className="ml-[24px] h-5 w-6" fill="none" stroke="#fff" strokeWidth="1.400">
        <path d="M1 7h4l5-5v16l-5-5H1zM13 7q2 3 0 6M16 4.500q4 5.500 0 11" />
        <path d="M19 2q6 8 0 16" stroke="#7f8b99" />
      </svg>
      <div className="ml-[22px] flex w-[86px] flex-col items-center text-[17px] leading-7">
        <Fit w={76}>10:35 AM</Fit>
        <Fit w={82}>9/24/2021</Fit>
      </div>
      <svg viewBox="0 0 24 24" className="ml-[27px] h-6 w-6">
        <path d="M0 0h24v18h-9l-6 6v-6H0z" fill="#fff" />
        <path d="M4 5h15M4 9h15M4 13h9" stroke="#1c2a45" strokeWidth="1.600" />
        <path d="M19 12q5 6-3 11 9 2 8-7-1-3-5-4z" fill="#fff" stroke="#1c2a45" />
      </svg>
      <span className="ml-[31px] h-full w-px bg-[#8a94a3]" />
    </div>
  );
}

function RightScreen() {
  return (
    <section className="relative flex h-[1080px] w-[1920px] flex-col overflow-hidden bg-[#0092f0]">
      <Wallpaper />
      <div className="relative grid h-[1020px] grid-cols-[repeat(17,112px)] grid-rows-[repeat(7,123px)] pt-[7px]">
        {items.map((it) => (
          <DesktopIcon key={it.c + "-" + it.r} item={it} />
        ))}
      </div>
      <MeetingBar />
      <div className="relative flex h-[60px] justify-between bg-linear-to-r from-[#22363f] from-40% via-[#1f3041] via-70% to-[#1b2646]">
        <TaskButtons big />
        <Tray />
      </div>
    </section>
  );
}

export default function App() {
  return (
    <main className="flex h-[1080px] w-[3600px] overflow-hidden font-['Noto_Sans','Open_Sans',sans-serif]">
      <LeftScreen />
      <RightScreen />
    </main>
  );
}
